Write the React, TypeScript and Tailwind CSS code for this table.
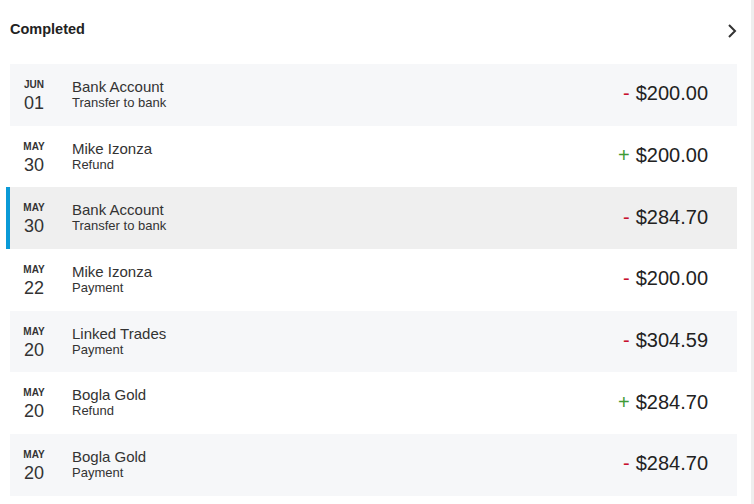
type Tx = {
  month: string;
  day: string;
  name: string;
  kind: string;
  sign: "+" | "-";
  amount: string;
  active?: boolean;
};

const txs: Tx[] = [
  { month: "JUN", day: "01", name: "Bank Account", kind: "Transfer to bank", sign: "-", amount: "$200.00" },
  { month: "MAY", day: "30", name: "Mike Izonza", kind: "Refund", sign: "+", amount: "$200.00" },
  { month: "MAY", day: "30", name: "Bank Account", kind: "Transfer to bank", sign: "-", amount: "$284.70", active: true },
  { month: "MAY", day: "22", name: "Mike Izonza", kind: "Payment", sign: "-", amount: "$200.00" },
  { month: "MAY", day: "20", name: "Linked Trades", kind: "Payment", sign: "-", amount: "$304.59" },
  { month: "MAY", day: "20", name: "Bogla Gold", kind: "Refund", sign: "+", amount: "$284.70" },
  { month: "MAY", day: "20", name: "Bogla Gold", kind: "Payment", sign: "-", amount: "$284.70" },
];

function Row({ tx, index }: { tx: Tx; index: number }) {
  const bg = tx.active ? "bg-[#efefef]" : index % 2 === 0 ? "bg-[#f6f7f9]" : "bg-white";
  return (
    <div className={`relative flex h-[61.7px] items-center ${bg}`}>
      {tx.active && <div className="absolute -left-1 top-0 h-full w-1 bg-[#0a9ad7]" />}
      {/* date */}
      <div className="flex w-[48px] flex-col items-center pt-[3px] text-[#333]">
        <span className="text-[10px] font-bold leading-[12px]">{tx.month}</span>
        <span className="mt-[1px] text-[18px] leading-[22px]">{tx.day}</span>
      </div>
      {/* name */}
      <div className="ml-[14px] flex flex-1 flex-col text-[#333]">
        <span className="text-[15px] leading-[16px]">{tx.name}</span>
        <span className="text-[13px] leading-[16px]">{tx.kind}</span>
      </div>
      {/* amount */}
      <div className="flex items-center pr-[29px] pb-[3px] text-[20px] text-[#222]">
        <span className={tx.sign === "-" ? "mr-[6px] text-[#c8102e]" : "mr-[6px] text-[#3f9b35]"}>
          {tx.sign}
        </span>
        <span>{tx.amount}</span>
      </div>
    </div>
  );
}

export default function App() {
  return (
    <div
      className="flex h-[504px] w-[754px] overflow-hidden bg-white"
      style={{ fontFamily: '"Liberation Sans", Arial, sans-serif' }}
    >
      <div className="flex flex-1 flex-col pl-[10px] pr-[14px]">
        <header className="flex h-[64px] items-center justify-between pb-[4px]">
          <span className="text-[14.5px] font-bold text-[#222]">Completed</span>
          <svg width="10" height="16" viewBox="0 0 10 16" className="mt-[2px] text-[#333]">
            <polyline points="2,2 8,8 2,14" fill="none" stroke="currentColor" strokeWidth="2" />
          </svg>
        </header>
        <div className="flex flex-col">
          {txs.map((tx, i) => (
            <Row key={i} tx={tx} index={i} />
          ))}
        </div>
      </div>
      <div className="w-[3px] bg-[#eeeeee]" />
    </div>
  );
}
